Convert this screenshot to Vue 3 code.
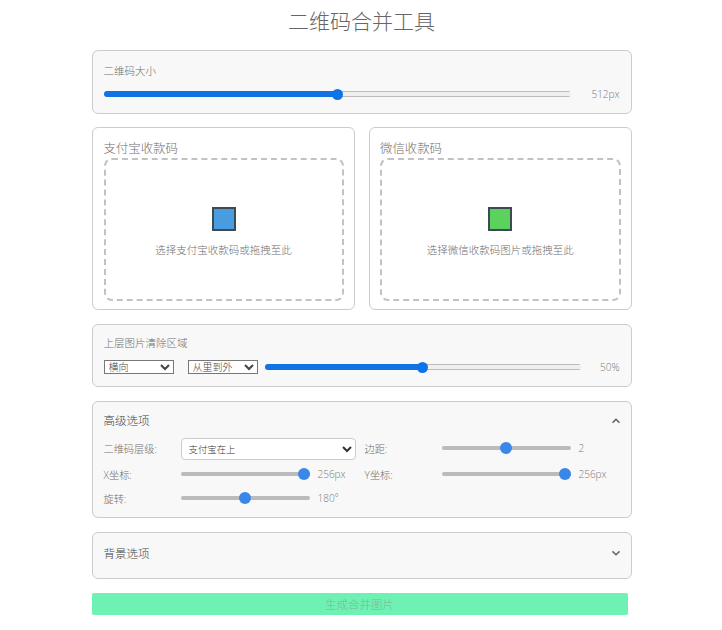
<script setup>
const fontNote = 'qr-tool'
</script>

<template>
  <div class="page" :data-name="fontNote">
    <h1 class="title">二维码合并工具</h1>

    <section class="panel size-panel">
      <div class="label">二维码大小</div>
      <div class="row">
        <input class="blue-range" style="--pct: 50%" type="range" min="0" max="100" value="50" />
        <span class="val size-val">512px</span>
      </div>
    </section>

    <div class="cards">
      <section class="card card-left">
        <h2 class="card-title">支付宝收款码</h2>
        <div class="drop">
          <span class="square sq-blue"></span>
          <p class="hint">选择支付宝收款码或拖拽至此</p>
        </div>
      </section>
      <section class="card">
        <h2 class="card-title">微信收款码</h2>
        <div class="drop">
          <span class="square sq-green"></span>
          <p class="hint">选择微信收款码图片或拖拽至此</p>
        </div>
      </section>
    </div>

    <section class="panel clear-panel">
      <div class="label">上层图片清除区域</div>
      <div class="row clear-row">
        <select class="mini-select"><option>横向</option></select>
        <select class="mini-select"><option>从里到外</option></select>
        <input class="blue-range" style="--pct: 50%" type="range" min="0" max="100" value="50" />
        <span class="val pct-val">50%</span>
      </div>
    </section>

    <section class="panel adv-panel">
      <div class="adv-head">
        <span class="adv-title">高级选项</span>
        <svg class="chev" viewBox="0 0 10 10"><path d="M1.5 6.8 L5 3.4 L8.5 6.8" /></svg>
      </div>
      <div class="adv-grid">
        <span class="field">二维码层级:</span>
        <select class="big-select"><option>支付宝在上</option></select>
        <span class="field">边距:</span>
        <div class="ctl"><input class="grey-range" type="range" min="0" max="100" value="50" /><span class="val">2</span></div>

        <span class="field">X坐标:</span>
        <div class="ctl"><input class="grey-range" type="range" min="0" max="100" value="100" /><span class="val">256px</span></div>
        <span class="field">Y坐标:</span>
        <div class="ctl"><input class="grey-range" type="range" min="0" max="100" value="100" /><span class="val">256px</span></div>

        <span class="field">旋转:</span>
        <div class="ctl"><input class="grey-range" type="range" min="0" max="100" value="50" /><span class="val">180°</span></div>
      </div>
    </section>

    <section class="panel bg-panel">
      <span class="adv-title bg-title">背景选项</span>
      <svg class="chev bg-chev" viewBox="0 0 10 10"><path d="M1.5 3.4 L5 6.8 L8.5 3.4" /></svg>
    </section>

    <button class="gen" disabled>生成合并图片</button>
  </div>
</template>

<style>
html, body { margin: 0; background: #fff; }
</style>

<style scoped>
.page {
  width: 540px;
  margin: 0 auto;
  padding-left: 1px;
  box-sizing: content-box;
  font-family: "Open Sans", "Noto Sans CJK SC", sans-serif;
  font-weight: 300;
  color: #6e6e6e;
  font-size: 10px;
}
.title {
  margin: 0;
  height: 50px;
  padding-top: 5px;
  box-sizing: border-box;
  text-align: center;
  font-weight: 300;
  font-size: 21px;
  line-height: 33px;
  color: #666;
}
.panel {
  box-sizing: border-box;
  background: #f8f8f8;
  border: 1px solid #ccc;
  border-radius: 6px;
  padding: 0 11px;
}
.size-panel { height: 64px; padding-top: 13px; }
.label { font-size: 10.5px; line-height: 14px; color: #6e6e6e; }
.row { display: flex; align-items: center; }
.size-panel .row { margin-top: 9px; height: 14px; }
.val { font-size: 10px; line-height: 14px; color: #7a7a7a; white-space: nowrap; }
.size-val { width: 49px; text-align: right; flex: none; }

input[type="range"] {
  -webkit-appearance: none;
  appearance: none;
  margin: 0;
  padding: 0;
  background: transparent;
  display: block;
}
.blue-range { flex: 1; min-width: 0; height: 12px; }
.blue-range::-webkit-slider-runnable-track {
  height: 6px;
  border-radius: 3px;
  background:
    linear-gradient(to right, #0f73e6 var(--pct), transparent var(--pct)),
    linear-gradient(#efefef, #efefef) center / 100% 4px no-repeat,
    #bbb;
}
.blue-range::-webkit-slider-thumb {
  -webkit-appearance: none;
  width: 11px;
  height: 11px;
  margin-top: -2.5px;
  border-radius: 50%;
  background: #0f73e6;
  border: none;
}

.cards {
  display: grid;
  grid-template-columns: 263px 263px;
  justify-content: space-between;
  margin-top: 13px;
}
.card {
  box-sizing: border-box;
  height: 183px;
  border: 1px solid #ccc;
  border-radius: 6px;
  padding: 11px 10px 0 10.5px;
  background: #fff;
}
.card-left { padding-left: 11px; }
.card-title {
  margin: 0;
  font-size: 12.4px;
  font-weight: 300;
  line-height: 19px;
  color: #6e6e6e;
}
.drop {
  box-sizing: border-box;
  height: 143px;
  border: 2px dashed #c2c2c2;
  border-radius: 8px;
  display: flex;
  flex-direction: column;
  align-items: center;
  padding-top: 47px;
}
.square {
  width: 24px;
  height: 24px;
  box-sizing: border-box;
  border: 2px solid #3d4a52;
}
.sq-blue { background: #4a9ce0; }
.sq-green { background: #5bd25b; }
.hint {
  margin: 12px 0 0;
  font-size: 10.5px;
  line-height: 14px;
  color: #6e6e6e;
}

.clear-panel { height: 63px; margin-top: 14px; padding-top: 11px; }
.clear-row { margin-top: 10px; height: 14px; }
.mini-select {
  box-sizing: border-box;
  width: 70px;
  height: 14px;
  flex: none;
  margin-right: 14px;
  padding: 0;
  font: 300 10px "Liberation Sans", "Noto Sans CJK SC", sans-serif;
  color: #444;
  background: #fff;
  border: 1px solid #777;
  border-radius: 0;
}
.mini-select + .mini-select { margin-right: 7px; }
.pct-val { width: 39px; text-align: right; flex: none; }

.adv-panel { height: 117px; margin-top: 14px; padding-top: 11px; }
.adv-head { display: flex; justify-content: space-between; align-items: center; height: 15px; }
.adv-title { font-size: 11.5px; line-height: 15px; color: #444; }
.chev { width: 10px; height: 10px; flex: none; margin-right: -1px; }
.chev path { fill: none; stroke: #666; stroke-width: 1.5; }
.adv-grid {
  display: grid;
  grid-template-columns: 77px 184px 77px 1fr;
  grid-template-rows: 28px 24px 24px;
  margin-top: 7px;
  align-items: center;
}
.field { color: #6e6e6e; font-size: 10.2px; margin-bottom: 2px; }
.big-select {
  box-sizing: border-box;
  width: 175px;
  height: 22px;
  font: 300 9.4px "Open Sans", "Noto Sans CJK SC", sans-serif;
  color: #333;
  background: #fff;
  border: 1px solid #ccc;
  border-radius: 4px;
  padding: 0 3px;
}
.ctl { display: flex; align-items: center; gap: 8px; margin-bottom: 2px; }
.grey-range { width: 129px; height: 12px; flex: none; }
.grey-range::-webkit-slider-runnable-track {
  height: 4px;
  border-radius: 2px;
  background: #bbb;
}
.grey-range::-webkit-slider-thumb {
  -webkit-appearance: none;
  width: 12px;
  height: 12px;
  margin-top: -4px;
  border-radius: 50%;
  background: #3a87e8;
  border: none;
}

.bg-panel {
  height: 47px;
  margin-top: 14px;
  display: flex;
  justify-content: space-between;
  align-items: center;
  padding-bottom: 4px;
}
.bg-chev { margin-bottom: 2px; }
.gen {
  display: block;
  width: 536px;
  height: 22px;
  margin-top: 14px;
  border: none;
  border-radius: 2px;
  background: #6ef2b4;
  color: #82b299;
  font: 300 11.5px "Open Sans", "Noto Sans CJK SC", sans-serif;
  padding: 0;
}
</style>
